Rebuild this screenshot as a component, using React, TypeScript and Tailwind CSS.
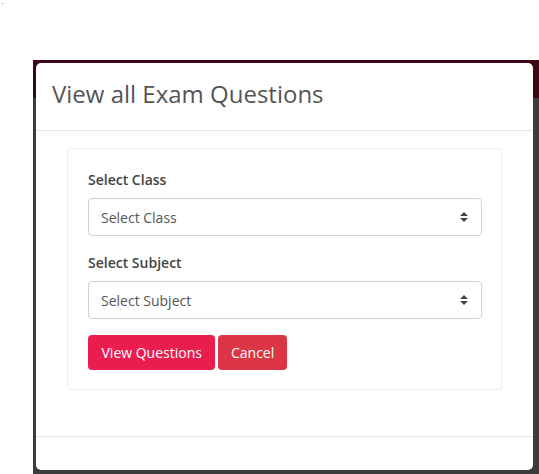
import React from "react";

function SortIcon() {
  return (
    <svg width="8" height="12" viewBox="0 0 8 12" className="shrink-0">
      <path d="M0 5 L4 1 L8 5 Z" fill="#444" />
      <path d="M0 7 L4 11 L8 7 Z" fill="#444" />
    </svg>
  );
}

function FakeSelect({ text }: { text: string }) {
  return (
    <div className="flex h-[38px] w-[394px] items-center justify-between rounded-[4px] border border-[#cfcfcf] pl-[12px] pr-[13px] text-[14px] text-[#555]">
      <span>{text}</span>
      <SortIcon />
    </div>
  );
}

export default function App() {
  return (
    <div
      className="relative h-[474px] w-[539px] overflow-hidden bg-white"
      style={{ fontFamily: '"Open Sans", "Noto Sans", sans-serif' }}
    >
      <div className="absolute left-[2px] top-[3px] h-[1px] w-[1px] bg-[#888]" />
      <div className="pl-[33px] pt-[60px]">
        <div className="h-[414px] w-[506px] bg-[linear-gradient(to_bottom,#3b0814_38px,#3c3c3c_38px)] pl-[3px] pt-[3px]">
          <div className="flex h-[407px] w-[497px] flex-col rounded-[5px] bg-white">
            <div className="flex h-[68px] items-center border-b border-[#e5e5e5] pb-[6px] pl-[16px]">
              <h1 className="text-[24px] font-normal text-[#555]">View all Exam Questions</h1>
            </div>
            <div className="h-[306px] border-b border-[#e5e5e5] pl-[31px] pt-[17px]">
              <div className="h-[242px] w-[435px] rounded-[3px] border border-[#eee] pl-[20px] pt-[20px]">
                <div className="text-[14px] font-semibold text-[#444]">Select Class</div>
                <div className="mt-[8px]">
                  <FakeSelect text="Select Class" />
                </div>
                <div className="mt-[16px] text-[14px] font-semibold text-[#444]">Select Subject</div>
                <div className="mt-[8px]">
                  <FakeSelect text="Select Subject" />
                </div>
                <div className="mt-[16px] flex gap-[3px]">
                  <button className="h-[35px] rounded-[4px] bg-[#e91e4f] px-[13.5px] text-[14px] text-white">
                    View Questions
                  </button>
                  <button className="h-[35px] rounded-[4px] bg-[#dc3545] px-[12.5px] text-[14px] text-white">
                    Cancel
                  </button>
                </div>
              </div>
            </div>
          </div>
        </div>
      </div>
    </div>
  );
}
